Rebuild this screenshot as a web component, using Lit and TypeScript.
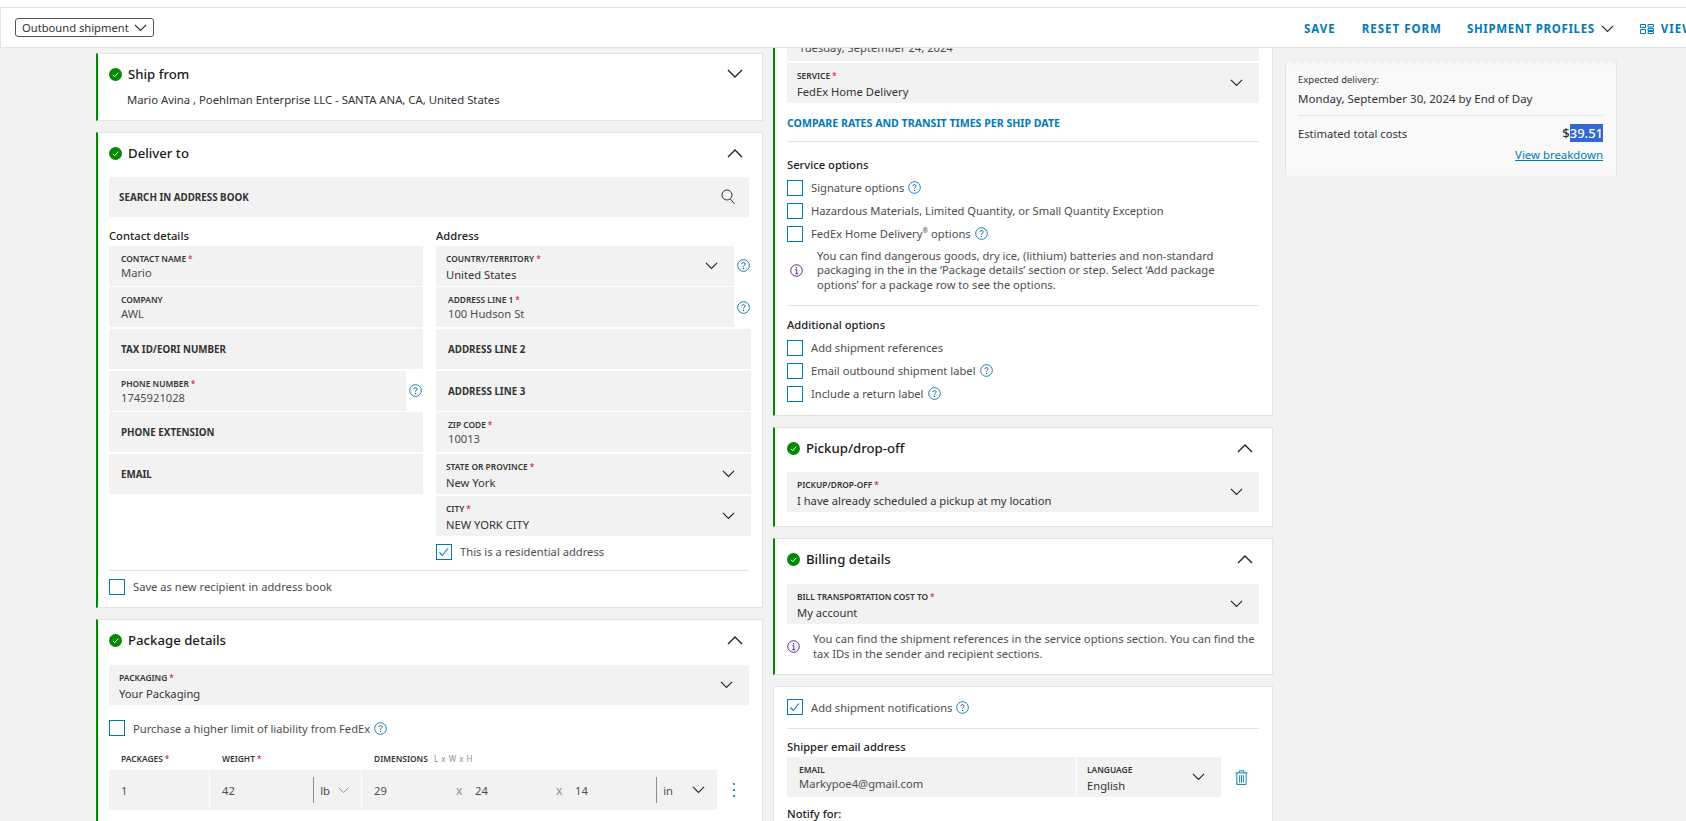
import {LitElement, html, css, svg} from 'lit';
import {customElement} from 'lit/decorators.js';

const chevron = (up = false, cls = 'chev') => html`<svg class="${cls}" viewBox="0 0 16 10" fill="none" stroke="currentColor" stroke-width="1.4"><path d="${up ? 'M1 9l7-7 7 7' : 'M1 1l7 7 7-7'}"/></svg>`;

const help = html`<svg class="help" viewBox="0 0 14 14" fill="none"><circle cx="7" cy="7" r="6.3" stroke="#007ab7"/><path d="M5.3 5.5c0-2.2 3.4-2.2 3.4 0 0 1.3-1.7 1.3-1.7 2.8" stroke="#1d4f73" stroke-width="1"/><circle cx="7" cy="10.2" r=".7" fill="#1d4f73"/></svg>`;

const info = html`<svg class="info" viewBox="0 0 14 14" fill="none"><circle cx="7" cy="7" r="6.2" stroke="#4d148c"/><path d="M5.6 6.2H7.3V10.4M5.6 10.4H8.8" stroke="#4d148c"/><circle cx="7" cy="4" r=".8" fill="#4d148c"/></svg>`;

const okIcon = html`<svg class="ok" viewBox="0 0 13 13"><circle cx="6.5" cy="6.5" r="6.5" fill="#008a00"/><path d="M3.8 6.8l1.9 1.9 3.6-4" fill="none" stroke="#fff"/></svg>`;

const tick = svg`<path d="M3.5 8.500l2.800 3 5.500-7" fill="none" stroke="#007ab7" stroke-width="1.1"/>`;

const box = (checked = false) => html`<svg class="box" viewBox="0 0 16 16"><rect x=".5" y=".5" width="15" height="15" fill="#fff" stroke="#007ab7"/>${checked ? tick : ''}</svg>`;

const check = (label: unknown, checked = false, withHelp = false) => html`
    <div class="check">${box(checked)}<span>${label}</span>${withHelp ? help : ''}</div>
`;

const field = (label: string, value: string, opts: {req?: boolean, select?: boolean, cls?: string} = {}) => html`
    <div class="field ${opts.select ? 'select' : ''} ${opts.cls ?? ''}">
        <div class="field-text">
            <label>${label}${opts.req ? html`<b>*</b>` : ''}</label>
            <span>${value}</span>
        </div>
        ${opts.select ? chevron() : ''}
    </div>
`;

const empty = (label: string) => html`<div class="field empty"><label>${label}</label></div>`;

const head = (title: string, up = true) => html`
    <div class="card-head">${okIcon}<h2>${title}</h2>${chevron(up, 'chev big')}</div>
`;

@customElement('app-root')
class AppRoot extends LitElement {

    render() {
        return html`
            <div class="top-line"></div>
            <header>
                <div class="mode"><span>Outbound shipment</span>${chevron(false, 'chev mode-chev')}</div>
                <nav>
                    <a>SAVE</a>
                    <a>RESET FORM</a>
                    <a class="profiles">SHIPMENT PROFILES ${chevron(false, 'chev nav-chev')}</a>
                    <i class="nav-div"></i>
                    <a class="view">
                        <svg viewBox="0 0 14 10" fill="none" stroke="#007ab7"><path d="M.5.5h5v3h-5zM.5 5.500h5v4h-5zM8 .5h5.500v2.500H8zM8 4.500h5.500v2H8zM8 7.500h5.500v2H8z"/></svg>
                        VIEW
                    </a>
                </nav>
            </header>
            <main>
                <section class="col left">
                    <div class="card done ship">
                        ${head('Ship from', false)}
                        <p class="summary">Mario Avina , Poehlman Enterprise LLC - SANTA ANA, CA, United States</p>
                    </div>
                    <div class="card done deliver">
                        ${head('Deliver to')}
                        <div class="field search"><label>SEARCH IN ADDRESS BOOK</label>
                            <svg viewBox="0 0 14 16" fill="none" stroke="#333"><circle cx="6" cy="6" r="5"/><path d="M9.500 10l4 5"/></svg>
                        </div>
                        <div class="two">
                            <div class="stack">
                                <h3>Contact details</h3>
                                ${field('CONTACT NAME', 'Mario', {req: true})}
                                ${field('COMPANY', 'AWL')}
                                ${empty('TAX ID/EORI NUMBER')}
                                <div class="with-help">${field('PHONE NUMBER', '1745921028', {req: true})}${help}</div>
                                ${empty('PHONE EXTENSION')}
                                ${empty('EMAIL')}
                            </div>
                            <div class="stack">
                                <h3>Address</h3>
                                <div class="with-help">${field('COUNTRY/TERRITORY', 'United States', {req: true, select: true})}${help}</div>
                                <div class="with-help">${field('ADDRESS LINE 1', '100 Hudson St', {req: true})}${help}</div>
                                ${empty('ADDRESS LINE 2')}
                                ${empty('ADDRESS LINE 3')}
                                ${field('ZIP CODE', '10013', {req: true})}
                                ${field('STATE OR PROVINCE', 'New York', {req: true, select: true})}
                                ${field('CITY', 'NEW YORK CITY', {req: true, select: true})}
                                <div class="residential">${check('This is a residential address', true)}</div>
                            </div>
                        </div>
                        <hr class="save-rule">
                        ${check('Save as new recipient in address book')}
                    </div>
                    <div class="card done package">
                        ${head('Package details')}
                        ${field('PACKAGING', 'Your Packaging', {req: true, select: true})}
                        <div class="liability">${check('Purchase a higher limit of liability from FedEx', false, true)}</div>
                        <div class="pkg-grid">
                            <label>PACKAGES<b>*</b></label>
                            <label>WEIGHT<b>*</b></label>
                            <label>DIMENSIONS <em>L x W x H</em></label>
                            <span></span>
                            <div class="pkg-cell">1</div>
                            <div class="pkg-cell weight"><span>42</span><span class="unit">lb ${chevron(false, 'chev unit-chev')}</span></div>
                            <div class="pkg-cell dims">
                                <span>29</span><i>x</i><span>24</span><i>x</i><span>14</span>
                                <span class="unit">in ${chevron()}</span>
                            </div>
                            <svg class="dots" viewBox="0 0 4 16" fill="#007ab7"><circle cx="2" cy="2" r="1.100"/><circle cx="2" cy="8" r="1.100"/><circle cx="2" cy="14" r="1.100"/></svg>
                        </div>
                    </div>
                </section>

                <section class="col right">
                    <div class="card done service">
                        <div class="stack">
                            ${field('SHIP DATE', 'Tuesday, September 24, 2024', {req: true})}
                            ${field('SERVICE', 'FedEx Home Delivery', {req: true, select: true})}
                        </div>
                        <a class="compare">COMPARE RATES AND TRANSIT TIMES PER SHIP DATE</a>
                        <hr>
                        <h3>Service options</h3>
                        <div class="checks">
                            ${check('Signature options', false, true)}
                            ${check('Hazardous Materials, Limited Quantity, or Small Quantity Exception')}
                            ${check(html`FedEx Home Delivery<sup>®</sup> options`, false, true)}
                        </div>
                        <div class="note service-note">${info}<p>You can find dangerous goods, dry ice, (lithium) batteries and non-standard packaging in the in the ‘Package details’ section or step. Select ‘Add package options’ for a package row to see the options.</p></div>
                        <hr class="add-rule">
                        <h3 class="add-title">Additional options</h3>
                        <div class="checks">
                            ${check('Add shipment references')}
                            ${check('Email outbound shipment label', false, true)}
                            ${check('Include a return label', false, true)}
                        </div>
                    </div>
                    <div class="card done pickup">
                        ${head('Pickup/drop-off')}
                        ${field('PICKUP/DROP-OFF', 'I have already scheduled a pickup at my location', {req: true, select: true})}
                    </div>
                    <div class="card done billing">
                        ${head('Billing details')}
                        ${field('BILL TRANSPORTATION COST TO', 'My account', {req: true, select: true})}
                        <div class="note billing-note">${info}<p>You can find the shipment references in the service options section. You can find the tax IDs in the sender and recipient sections.</p></div>
                    </div>
                    <div class="card notify">
                        ${check('Add shipment notifications', true, true)}
                        <hr>
                        <h3>Shipper email address</h3>
                        <div class="email-row">
                            ${field('EMAIL', 'Markypoe4@gmail.com', {cls: 'email'})}
                            ${field('LANGUAGE', 'English', {select: true, cls: 'lang'})}
                            <svg class="trash" viewBox="0 0 14 16" fill="none" stroke="#007ab7"><path d="M.5 3h13M4.500 3V.8h5V3M2 3v12.500h10V3M5 5.500v8M7 5.500v8M9 5.500v8"/></svg>
                        </div>
                        <h3 class="notify-for">Notify for:</h3>
                    </div>
                </section>

                <aside class="receipt">
                    <small>Expected delivery:</small>
                    <p class="eta">Monday, September 30, 2024 by End of Day</p>
                    <hr>
                    <div class="total"><span>Estimated total costs</span><strong>$<mark>39.51</mark></strong></div>
                    <a>View breakdown</a>
                </aside>
            </main>
        `;
    }

    static styles = css`
        :host {
            display: block;
            height: 821px;
            overflow: hidden;
            background: #f2f2f2;
            color: #333;
            font-family: "Noto Sans", "Open Sans", sans-serif;
            font-size: 11.2px;
        }

        * {
            box-sizing: border-box;
        }

        h2, h3, p {
            margin: 0;
            font-weight: 400;
        }

        hr {
            border: 0;
            border-top: 1px solid #e3e3e3;
            margin: 0;
        }

        svg {
            flex: none;
            display: block;
        }

        .top-line {
            height: 8px;
            background: #fff;
            border-bottom: 1px solid #e3e3e3;
        }

        header {
            height: 40px;
            background: #fff;
            border-bottom: 1px solid #e3e3e3;
            border-left: 1px solid #e3e3e3;
            display: flex;
            align-items: center;
            justify-content: space-between;
            padding-left: 14px;
            position: relative;
            z-index: 2;
        }

        .mode {
            width: 139px;
            height: 19px;
            border: 1px solid #555;
            border-radius: 3px;
            display: flex;
            align-items: center;
            justify-content: space-between;
            padding: 0 6px;
            font-size: 11.2px;
        }

        .mode-chev {
            width: 11px;
            height: 7px;
            color: #333;
        }

        nav {
            display: flex;
            align-items: center;
            width: 382px;
            flex: none;
            padding-top: 2px;
            white-space: nowrap;
            color: #007ab7;
            font-weight: 700;
            font-size: 11.5px;
            letter-spacing: 1px;
        }

        nav a {
            display: flex;
            align-items: center;
            gap: 6px;
        }

        nav a + a {
            margin-left: 26px;
        }

        nav .profiles {
            margin-left: 25px;
            letter-spacing: .65px;
        }

        .nav-chev {
            width: 11px;
            height: 7px;
            color: #007ab7;
        }

        .nav-div {
            width: 1px;
            height: 26px;
            background: #ddd;
            margin: -2px 13px 0;
        }

        nav a.view {
            margin-left: 0;
            gap: 7px;
        }

        .view svg {
            width: 14px;
            height: 10px;
        }

        main {
            height: 773px;
            overflow: hidden;
            display: flex;
            align-items: flex-start;
            padding-left: 96px;
        }

        .col {
            display: flex;
            flex-direction: column;
            flex: none;
        }

        .left {
            width: 667px;
            gap: 11px;
            padding-top: 5px;
        }

        .right {
            width: 500px;
            gap: 11px;
            margin: -28px 0 0 10px;
        }

        .card {
            background: #fff;
            border: 1px solid #e3e3e3;
            padding: 0 13px 0 12px;
        }

        .card.done {
            border-left: 2px solid #008a00;
        }

        .left .card {
            padding-left: 11px;
        }

        .card-head {
            height: 32px;
            margin-top: 4px;
            display: flex;
            align-items: center;
            gap: 6px;
        }

        .card-head h2 {
            font-size: 13.2px;
            color: #1a1a1a;
            flex: 1;
            font-weight: 500;
        }

        .ok {
            width: 13px;
            height: 13px;
        }

        .chev {
            width: 13px;
            height: 8px;
            color: #222;
        }

        .chev.big {
            width: 16px;
            height: 10px;
            margin-right: 6px;
        }

        .ship {
            height: 68px;
        }

        .summary {
            margin: 2px 0 0 18px;
            line-height: 16px;
            font-size: 11.3px;
            color: #333;
        }

        .deliver {
            height: 476px;
        }

        .search {
            height: 40px;
            margin-top: 8px;
        }

        .field.search {
            padding: 0 14px 0 10px;
        }

        .search svg {
            width: 14px;
            height: 16px;
        }

        .two {
            display: grid;
            grid-template-columns: 314px 315px;
            gap: 13px;
            margin-top: 11px;
        }

        .stack {
            display: flex;
            flex-direction: column;
            gap: 1.7px;
        }

        .two h3, .service h3, .notify h3 {
            font-size: 11.2px;
            color: #222;
            font-weight: 500;
            line-height: 16px;
        }

        .field {
            height: 40px;
            background: #f2f2f2;
            display: flex;
            align-items: center;
            justify-content: space-between;
            padding: 0 12px;
            color: #333;
            width: 100%;
            min-width: 0;
        }

        .field.select {
            padding: 0 16px 0 10px;
        }

        .field-text {
            display: flex;
            flex-direction: column;
            padding-top: 1px;
            min-width: 0;
        }

        .select .field-text {
            gap: 2px;
            padding-top: 3px;
        }

        .field label {
            font-size: 8.4px;
            font-weight: 600;
            line-height: 12px;
            color: #333;
        }

        .field span {
            font-size: 11.2px;
            line-height: 15px;
            color: #4d4d4d;
            white-space: nowrap;
        }

        .field.select span {
            color: #333;
        }

        .field.empty label, .field.search label {
            font-size: 9.8px;
            font-weight: 700;
            padding-top: 2px;
        }

        label b {
            color: #de002e;
            margin-left: 2px;
            font-weight: 400;
        }

        .with-help {
            display: flex;
            align-items: center;
            gap: 2.5px;
        }

        .with-help .field {
            flex: 1;
        }

        .with-help .help {
            margin-right: 1.5px;
        }

        .help {
            width: 13px;
            height: 13px;
            flex: none;
        }

        .check {
            display: flex;
            align-items: center;
            gap: 8px;
            height: 16px;
            white-space: nowrap;
            color: #4d4d4d;
        }

        .check .help {
            margin-left: -4px;
        }

        .box {
            width: 16px;
            height: 16px;
        }

        .check sup {
            font-size: 7px;
            line-height: 0;
        }

        .residential {
            margin-top: 6px;
        }

        .save-rule {
            margin-top: 10px;
            margin-bottom: 8px;
        }

        .package {
            height: 240px;
        }

        .package > .field {
            margin-top: 9px;
        }

        .pickup .field {
            margin-top: 8px;
        }

        .billing .field {
            margin-top: 9px;
        }

        .liability {
            margin-top: 15px;
        }

        .pkg-grid {
            display: grid;
            grid-template-columns: 100px 151px 355px 34px;
            grid-template-rows: 34px 40px;
            column-gap: 1px;
            align-items: center;
        }

        .pkg-grid > label {
            font-size: 8.4px;
            font-weight: 600;
            padding-left: 12px;
            padding-top: 10px;
        }

        .pkg-grid em {
            font-style: normal;
            color: #8e8e8e;
            font-weight: 400;
            font-size: 8px;
            margin-left: 4px;
            letter-spacing: .5px;
        }

        .pkg-cell {
            height: 40px;
            background: #f2f2f2;
            display: flex;
            align-items: center;
            padding-left: 12px;
            color: #4d4d4d;
        }

        .weight {
            justify-content: space-between;
            padding-right: 12px;
        }

        .unit {
            display: flex;
            align-items: center;
            gap: 8px;
            height: 26px;
            border-left: 1px solid #8e8e8e;
            padding-left: 6px;
            color: #4d4d4d;
            margin-left: auto;
        }

        .unit-chev {
            width: 11px;
            height: 7px;
            color: #8e8e8e;
        }

        .dims {
            padding-right: 12px;
        }

        .dims > span:not(.unit) {
            width: 82px;
        }

        .dims i {
            font-style: normal;
            font-size: 12px;
            color: #8e8e8e;
            width: 19px;
        }

        .dims > span:nth-of-type(2) {
            width: 81px;
        }

        .dims > span:nth-of-type(3) {
            width: auto;
        }

        .dims .unit {
            gap: 19px;
            padding-left: 6px;
        }

        .dots {
            width: 4px;
            height: 16px;
            margin-left: 14px;
        }

        .service {
            height: 396px;
        }

        .compare {
            display: block;
            margin-top: 13px;
            font-weight: 700;
            font-size: 10.6px;
            line-height: 14px;
            color: #007ab7;
        }

        .service hr {
            margin-top: 11px;
        }

        .service h3 {
            margin-top: 15px;
        }

        .checks {
            display: flex;
            flex-direction: column;
            gap: 7px;
            margin-top: 7px;
        }

        .note {
            display: flex;
            align-items: center;
            line-height: 14.7px;
            color: #4d4d4d;
        }

        .info {
            width: 13px;
            height: 13px;
        }

        .service-note {
            gap: 14px;
            margin: 7px 0 0 3px;
        }

        .service-note p {
            max-width: 420px;
        }

        .service .add-rule {
            margin-top: 12px;
        }

        .service .add-title {
            margin-top: 11px;
        }

        .pickup {
            height: 100px;
        }

        .billing {
            height: 136.5px;
        }

        .billing-note {
            gap: 13px;
            margin-top: 8px;
        }

        .notify {
            height: 200px;
            padding-top: 12.5px;
            padding-left: 13px;
        }

        .notify hr {
            margin-top: 13px;
        }

        .notify h3 {
            margin-top: 10px;
        }

        .email-row {
            display: flex;
            gap: 1px;
            align-items: center;
            margin-top: 2px;
        }

        .email {
            width: 289px;
        }

        .lang {
            width: 144px;
        }

        .trash {
            width: 13px;
            height: 15px;
            margin-left: 13px;
        }

        .notify .notify-for {
            margin-top: 9px;
        }

        .receipt {
            position: relative;
            width: 332px;
            height: 117px;
            margin: 13px 0 0 12px;
            padding: 12px 13px 0 12px;
            background: #f9f9f9;
            border: 1px solid #e3e3e3;
            border-width: 0 1px;
            flex: none;
            display: flex;
            flex-direction: column;
            color: #333;
        }

        .receipt::before, .receipt::after {
            content: "";
            position: absolute;
            left: -1px;
            right: -1px;
            height: 4px;
            background-size: 8px 8px;
            background-repeat: repeat-x;
        }

        .receipt::before {
            top: 0;
            background-image:
                linear-gradient(135deg, #f2f2f2 25%, transparent 25%),
                linear-gradient(225deg, #f2f2f2 25%, transparent 25%);
        }

        .receipt::after {
            bottom: 0;
            background-position: 0 bottom;
            background-image:
                linear-gradient(45deg, #f2f2f2 25%, transparent 25%),
                linear-gradient(315deg, #f2f2f2 25%, transparent 25%);
        }

        .receipt small {
            font-size: 9.5px;
            line-height: 14px;
        }

        .eta {
            font-size: 11.5px;
            margin-top: 3px;
            line-height: 17px;
        }

        .receipt hr {
            margin-top: 8px;
        }

        .total {
            display: flex;
            justify-content: space-between;
            align-items: center;
            margin-top: 8px;
        }

        .total strong {
            font-size: 13px;
            font-weight: 500;
        }

        mark {
            background: #3367d1;
            color: #fff;
        }

        .receipt a {
            align-self: flex-end;
            margin-top: 5px;
            font-size: 11.4px;
            color: #007ab7;
            text-decoration: underline;
        }
    `;
}
